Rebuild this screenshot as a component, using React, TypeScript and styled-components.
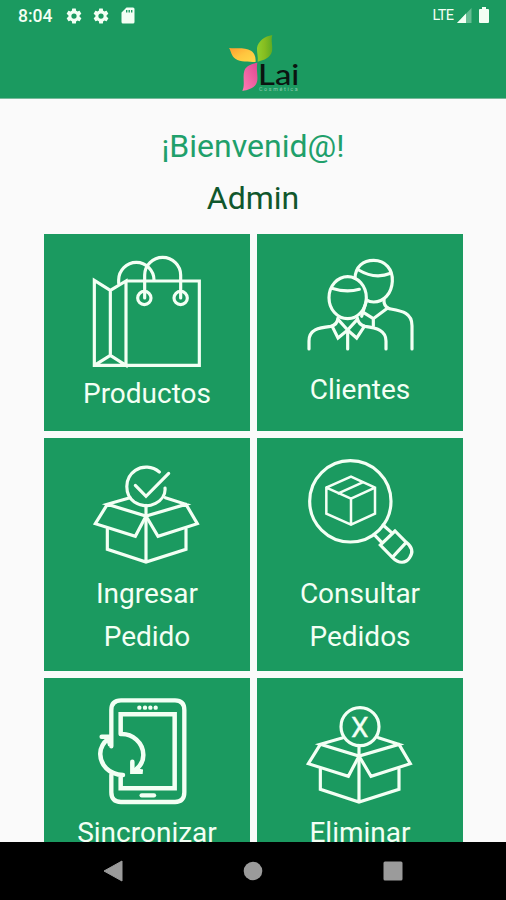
import React from "react";
import styled, { createGlobalStyle } from "styled-components";

const GlobalStyle = createGlobalStyle`
  * { box-sizing: border-box; }
  body { margin: 0; background: #fafafa; font-family: Roboto, sans-serif; }
`;

const GREEN = "#1b9a60";
const INK = "#f3fff4";

const Screen = styled.div`
  display: flex;
  flex-direction: column;
  width: 506px;
  height: 900px;
  overflow: hidden;
  background: #fafafa;
`;

const Header = styled.header`
  flex: none;
  height: 98px;
  background: ${GREEN};
  box-shadow: 0 1px 0 #78b99a;
`;

const StatusBar = styled.div`
  display: flex;
  align-items: center;
  height: 32px;
  padding: 0 14.5px 0 18px;
  color: ${INK};
`;

const Clock = styled.span`
  width: 47px;
  font-size: 17.5px;
  font-weight: 500;
  line-height: 32px;
`;

const StatusIcons = styled.div`
  display: flex;
  align-items: center;
  gap: 9px;
`;

const Signals = styled(StatusIcons)`
  margin-left: auto;
  gap: 2px;
`;

const Network = styled.span`
  font-size: 14.5px;
  letter-spacing: -0.6px;
  line-height: 32px;
  margin: -1px 0 0 0;
`;

const LogoRow = styled.div`
  display: flex;
  padding-left: 222px;
`;

const Main = styled.main`
  flex: 1;
  min-height: 0;
  overflow: hidden;
`;

const Greeting = styled.h1<{ $tone: string }>`
  margin: 0;
  height: 52px;
  line-height: 52px;
  text-align: center;
  font-weight: 400;
  font-size: 32px;
  color: ${(p) => p.$tone};
`;

const Welcome = styled.section`
  padding-top: 22px;
  height: 136px;
`;

const Grid = styled.div`
  display: grid;
  grid-template-columns: 206px 206px;
  grid-template-rows: 197px 233px 233px;
  gap: 7px;
  padding-left: 44px;
`;

const Tile = styled.button`
  display: flex;
  flex-direction: column;
  align-items: center;
  padding: 0;
  border: 0;
  background: ${GREEN};
  color: ${INK};
  font-family: inherit;
`;

const Artwork = styled.svg`
  flex: none;
  display: block;
  fill: none;
  stroke: ${INK};
  stroke-width: 9.5;
  stroke-linejoin: miter;
  stroke-linecap: round;
`;

const Label = styled.span`
  font-size: 28px;
  line-height: 43px;
  white-space: pre-line;
  text-align: center;
`;

const NavBar = styled.nav`
  flex: none;
  display: grid;
  grid-template-columns: 140px 140px 140px;
  justify-content: center;
  align-items: center;
  justify-items: center;
  height: 58px;
  background: #000;
`;

const Gear = () => (
  <svg width="18" height="18" viewBox="0 0 24 24" fill={INK}>
    <path d="M19.4 13c0-.3.1-.6.1-1s0-.7-.1-1l2.100-1.650c.2-.15.25-.4.12-.64l-2-3.460c-.12-.22-.38-.3-.6-.22l-2.500 1c-.52-.4-1.080-.73-1.700-.98l-.37-2.650A.5.5 0 0 0 14 2h-4a.5.5 0 0 0-.5.42l-.37 2.650c-.62.25-1.180.58-1.700.98l-2.500-1c-.22-.08-.48 0-.6.22l-2 3.460c-.13.22-.07.49.12.64L4.600 11c0 .3-.1.66-.1 1s0 .7.1 1l-2.110 1.650c-.19.15-.24.42-.12.64l2 3.460c.12.22.38.3.6.22l2.500-1c.52.4 1.080.73 1.700.98l.37 2.650c.04.24.25.42.5.42h4c.25 0 .46-.18.5-.42l.37-2.650c.62-.25 1.180-.58 1.700-.98l2.500 1c.22.08.48 0 .6-.22l2-3.460c.12-.22.07-.49-.12-.64zM12 15.500a3.500 3.500 0 1 1 0-7 3.500 3.500 0 0 1 0 7z" />
  </svg>
);

const SdCard = () => (
  <svg width="20" height="18" viewBox="0 0 20 18" fill={INK}>
    <path
      fillRule="evenodd"
      d="M7.500 .5H14a1.500 1.500 0 0 1 1.500 1.500V15a1.500 1.500 0 0 1-1.500 1.500H4A1.500 1.500 0 0 1 2.500 15V5.500zM7 3V5.500h1.400V3zM9.500 3V5.500h1.400V3zM12 3V5.500h1.400V3z"
    />
  </svg>
);

const SignalIcon = () => (
  <svg width="17" height="18" viewBox="0 0 17 18" fill={INK}>
    <path d="M15.500 1V16H1z" opacity=".35" />
    <path d="M10 6.500V16H1z" />
  </svg>
);

const BatteryIcon = () => (
  <svg width="17" height="18" viewBox="0 0 17 18" fill={INK}>
    <path d="M7 0h4v2h2a1 1 0 0 1 1 1V15a1 1 0 0 1-1 1H5a1 1 0 0 1-1-1V3a1 1 0 0 1 1-1h2z" />
  </svg>
);

const Logo = () => (
  <svg width="84" height="64" viewBox="36 21 252 192">
    <defs>
      <linearGradient id="leaf" x1="0" x2="1">
        <stop offset="0" stopColor="#8fd02c" />
        <stop offset=".5" stopColor="#86bd20" />
        <stop offset="1" stopColor="#5fab22" />
      </linearGradient>
      <linearGradient id="sun" x1="0" x2="1" y2="1">
        <stop offset="0" stopColor="#ff9d2e" />
        <stop offset=".5" stopColor="#ffc63f" />
        <stop offset="1" stopColor="#ffd84a" />
      </linearGradient>
      <linearGradient id="petal" x1="0" x2="1" y1="1" y2="0">
        <stop offset="0" stopColor="#ff7db4" />
        <stop offset="1" stopColor="#df4791" />
      </linearGradient>
    </defs>
    <path fill="url(#leaf)" d="M187 30C165 34 144 48 141 69c-1 14 4 25 2 41 19-4 39-12 43-31 3-17-4-32 1-49z" />
    <path fill="url(#sun)" d="M57 69c24 2 49-3 66 8 12 8 14 20 14 34-22-2-45 1-61-10-13-9-12-22-19-32z" />
    <path fill="url(#petal)" d="M142 113c-15 3-34 9-39 24-6 20 3 42-6 61 16-2 33-8 41-20 10-17-1-41 4-65z" />
    <text x="144" y="180" fontFamily="Lato, sans-serif" fontSize="88" fontWeight="500" textLength="124" lengthAdjust="spacingAndGlyphs" fill="#0b1410">Lai</text>
    <text x="147" y="198" fontFamily="Roboto, sans-serif" fontSize="16" textLength="116" fill="#8ccbb0">Cosmética</text>
  </svg>
);

const BagArt = () => (
  <>
    <path d="M258 153H478V406H163V151L211 181 258 153V406L211 376 163 406M211 181V376" />
    <path d="M236 160V150A53 53 0 0 1 342 150M314 204V135A54 53 0 0 1 422 135V204" />
    <circle cx="313" cy="204" r="20" />
    <circle cx="422" cy="204" r="20" />
  </>
);

const PeopleArt = () => (
  <>
    <ellipse cx="284" cy="203" rx="56" ry="63" />
    <path d="M236 175Q280 189 319 178M306 145C307 109 331 91 362 91C397 91 420 118 418 154C416 190 393 216 362 216Q349 216 341 210" />
    <path d="M317 120Q365 149 413 130M255 264Q253 285 233 289C196 293 168 299 168 333V357M313 264Q316 284 336 289C372 293 399 302 399 333V357M284 302V357" />
    <path d="M255 268L284 300 313 268M238 290L255 324 284 300 311 324 334 289M393 208Q391 229 409 236C446 243 477 247 477 287V357" />
    <path d="M331 247L361 266 404 234M361 266V288M340 213L326 259" />
  </>
);

const BoxArt = () => (
  <>
    <path d="M270 191L202 211 318 246 438 211 376 191M202 211L166 269 286 307 318 246 354 307 472 269 438 211" />
    <path d="M202 285V346L318 384 438 346V285M318 214V384" />
  </>
);

const CheckArt = () => (
  <>
    <BoxArt />
    <path d="M358 114C337 96 307 95 286 109C252 132 253 182 283 204C326 232 379 201 375 162" />
    <path d="M286 154L318 187 386 118" />
  </>
);

const SearchArt = () => (
  <>
    <circle cx="292" cy="202" r="122" />
    <path strokeWidth="7.500" d="M294 128L366 161V239L294 272 220 239V161zM220 161L294 194 366 161M294 194V272M256 178L329 145" />
    <path d="M390 273L416 296M363 301L386 325M426 291L382 333 418 370C438 391 459 388 470 371C481 355 477 338 459 324zM459 326L418 370" />
  </>
);

const SyncArt = () => (
  <>
    <path strokeWidth="13" d="M214 217V108Q214 79 243 79H405Q433 79 433 108V355Q433 384 405 384H243Q214 384 214 355V302" />
    <path strokeWidth="13.500" d="M242 180V121H404V343H242V302M242 180C277 178 310 206 310 243Q310 270 286 288M204 195C174 218 174 258 199 283Q218 302 249 303" />
    <path strokeWidth="13.500" d="M185 188H211V215L204 192M277 263V293H308L281 288" />
    <path strokeWidth="13" d="M305 364H342" />
    <path strokeWidth="13" d="M298 101H298.100M315 101H315.100M331 101H331.100M347 101H347.100" />
  </>
);

const RemoveArt = () => (
  <>
    <BoxArt />
    <circle cx="321" cy="158" r="57" />
    <text x="320" y="188" textAnchor="middle" fontFamily="Roboto, sans-serif" fontSize="84" fill={INK} strokeWidth="1">X</text>
  </>
);

const tiles = [
  { label: "Productos", art: BagArt, height: 138 },
  { label: "Clientes", art: PeopleArt, height: 134 },
  { label: "Ingresar\nPedido", art: CheckArt, height: 134 },
  { label: "Consultar\nPedidos", art: SearchArt, height: 134 },
  { label: "Sincronizar", art: SyncArt, height: 133 },
  { label: "Eliminar", art: RemoveArt, height: 133 },
];

export default function App() {
  return (
    <Screen>
      <GlobalStyle />
      <Header>
        <StatusBar>
          <Clock>8:04</Clock>
          <StatusIcons>
            <Gear />
            <Gear />
            <SdCard />
          </StatusIcons>
          <Signals>
            <Network>LTE</Network>
            <SignalIcon />
            <BatteryIcon />
          </Signals>
        </StatusBar>
        <LogoRow>
          <Logo />
        </LogoRow>
      </Header>
      <Main>
        <Welcome>
          <Greeting $tone="#1fa06b">¡Bienvenid@!</Greeting>
          <Greeting $tone="#10572c">Admin</Greeting>
        </Welcome>
        <Grid>
          {tiles.map(({ label, art: Art, height }) => (
            <Tile key={label}>
              <Artwork width={206} height={height} viewBox={`12 12 618 ${height * 3}`}>
                <Art />
              </Artwork>
              <Label>{label}</Label>
            </Tile>
          ))}
        </Grid>
      </Main>
      <NavBar>
        <svg width="20" height="22" viewBox="0 0 20 22" fill="#9b9b9b"><path d="M19 1V21L1 11z" stroke="#9b9b9b" strokeLinejoin="round" /></svg>
        <svg width="20" height="20" viewBox="0 0 20 20" fill="#9b9b9b"><circle cx="10" cy="10" r="9.300" /></svg>
        <svg width="20" height="20" viewBox="0 0 20 20" fill="#9b9b9b"><rect x=".5" y=".5" width="19" height="19" rx="1.500" /></svg>
      </NavBar>
    </Screen>
  );
}
